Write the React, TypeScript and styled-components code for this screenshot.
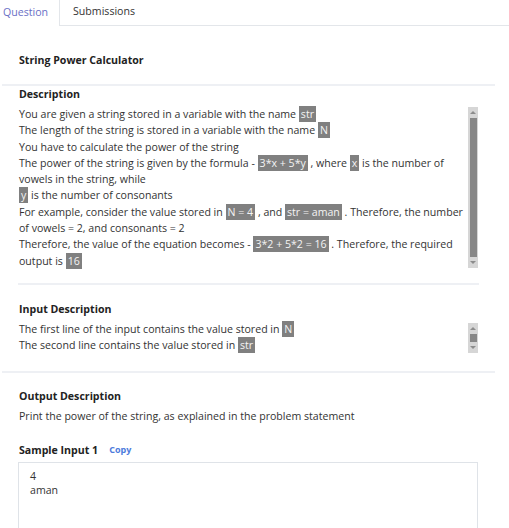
import React from "react";
import styled, { createGlobalStyle } from "styled-components";

const Global = createGlobalStyle`
  html, body { margin: 0; padding: 0; background: #fff; }
  body { font-family: "Open Sans", "Noto Sans", sans-serif; font-size: 10.6px; color: #333; }
`;

const Page = styled.div`
  width: 509px;
  height: 528px;
  overflow: hidden;
`;

const TabBar = styled.div`
  display: flex;
  height: 26px;
`;

const Tab = styled.div<{ $active?: boolean }>`
  display: flex;
  align-items: center;
  box-sizing: border-box;
  height: 26px;
  padding: 0 ${(p) => (p.$active ? "11px" : "14px")} 3px ${(p) => (p.$active ? "3px" : "13px")};
  color: ${(p) => (p.$active ? "#6a6fc6" : "#333")};
  border-right: ${(p) => (p.$active ? "1px solid #e3e6ea" : "none")};
  border-bottom: ${(p) => (p.$active ? "none" : "1px solid #e3e6ea")};
`;

const TabFill = styled.div`
  flex: 1;
  border-bottom: 1px solid #e3e6ea;
`;

const Title = styled.h1`
  margin: 0;
  padding: 26px 0 16px 19px;
  font-size: 10.6px;
  font-weight: 700;
  color: #222;
  line-height: 16px;
`;

const Divider = styled.div<{ $inset?: boolean }>`
  height: 2px;
  background: #eef0f4;
  margin: ${(p) => (p.$inset ? "0 30px 0 18px" : "0 14px 0 2px")};
`;

const Section = styled.section<{ $top: number; $bottom: number }>`
  padding: ${(p) => p.$top}px 31px ${(p) => p.$bottom}px 19px;
`;

const Heading = styled.h2`
  margin: 0 0 4px;
  font-size: 10.6px;
  font-weight: 700;
  color: #222;
  line-height: 16px;
  display: flex;
  align-items: center;
  gap: 11px;
`;

const CopyLink = styled.span`
  color: #4d7bdc;
  font-size: 9px;
  font-weight: 700;
`;

const ScrollRow = styled.div`
  display: flex;
  align-items: flex-start;
  gap: 3px;
`;

const Body = styled.div`
  flex: 1;
  line-height: 16.3px;
  color: #333;
`;

const Code = styled.span`
  display: inline-block;
  line-height: 16px;
  background: #808080;
  color: #f4f4f4;
  padding: 0 2px;
`;

const Track = styled.div<{ $h: number; $mt: number }>`
  width: 10px;
  height: ${(p) => p.$h}px;
  margin-top: ${(p) => p.$mt}px;
  background: #d6d6d6;
  display: flex;
  flex-direction: column;
  align-items: center;
  flex-shrink: 0;
`;

const Arrow = styled.div<{ $up?: boolean }>`
  width: 0;
  height: 0;
  margin: 4px 0;
  border-left: 3px solid transparent;
  border-right: 3px solid transparent;
  ${(p) =>
    p.$up ? "border-bottom: 3px solid #8c8c8c;" : "border-top: 3px solid #8c8c8c;"}
`;

const Thumb = styled.div`
  flex: 1;
  width: 7px;
  background: #878787;
`;

const SampleBox = styled.div`
  margin: 1px 0 0 -1px;
  border: 1px solid #dfe3e8;
  border-bottom: none;
  height: 80px;
  padding: 6px 11px;
  line-height: 14px;
  color: #333;
`;

export default function App() {
  return (
    <Page>
      <Global />
      <TabBar>
        <Tab $active>Question</Tab>
        <Tab>Submissions</Tab>
        <TabFill />
      </TabBar>
      <Title>String Power Calculator</Title>
      <Divider />
      <Section $top={0} $bottom={14}>
        <Heading>Description</Heading>
        <ScrollRow>
          <Body>
            You are given a string stored in a variable with the name <Code>str</Code>
            <br />
            The length of the string is stored in a variable with the name <Code>N</Code>
            <br />
            You have to calculate the power of the string
            <br />
            The power of the string is given by the formula - <Code>3*x + 5*y</Code> , where{" "}
            <Code>x</Code> is the number of vowels in the string, while
            <br /> <Code>y</Code> is the number of consonants
            <br />
            For example, consider the value stored in <Code>N = 4</Code> , and{" "}
            <Code>str = aman</Code> . Therefore, the number of vowels = 2, and consonants = 2
            <br />
            Therefore, the value of the equation becomes - <Code>3*2 + 5*2 = 16</Code> .
            Therefore, the required output is <Code>16</Code>
          </Body>
          <Track $h={161} $mt={1}>
            <Arrow $up />
            <Thumb />
            <Arrow />
          </Track>
        </ScrollRow>
      </Section>
      <Divider $inset />
      <Section $top={16} $bottom={17}>
        <Heading>Input Description</Heading>
        <ScrollRow>
          <Body>
            The first line of the input contains the value stored in <Code>N</Code>
            <br />
            The second line contains the value stored in <Code>str</Code>
          </Body>
          <Track $h={30} $mt={2}>
            <Arrow $up />
            <Thumb />
            <Arrow />
          </Track>
        </ScrollRow>
      </Section>
      <Divider />
      <Section $top={15} $bottom={0}>
        <Heading>Output Description</Heading>
        <Body>Print the power of the string, as explained in the problem statement</Body>
      </Section>
      <Section $top={18} $bottom={0}>
        <Heading>
          Sample Input 1 <CopyLink>Copy</CopyLink>
        </Heading>
        <SampleBox>
          4
          <br />
          aman
        </SampleBox>
      </Section>
    </Page>
  );
}
